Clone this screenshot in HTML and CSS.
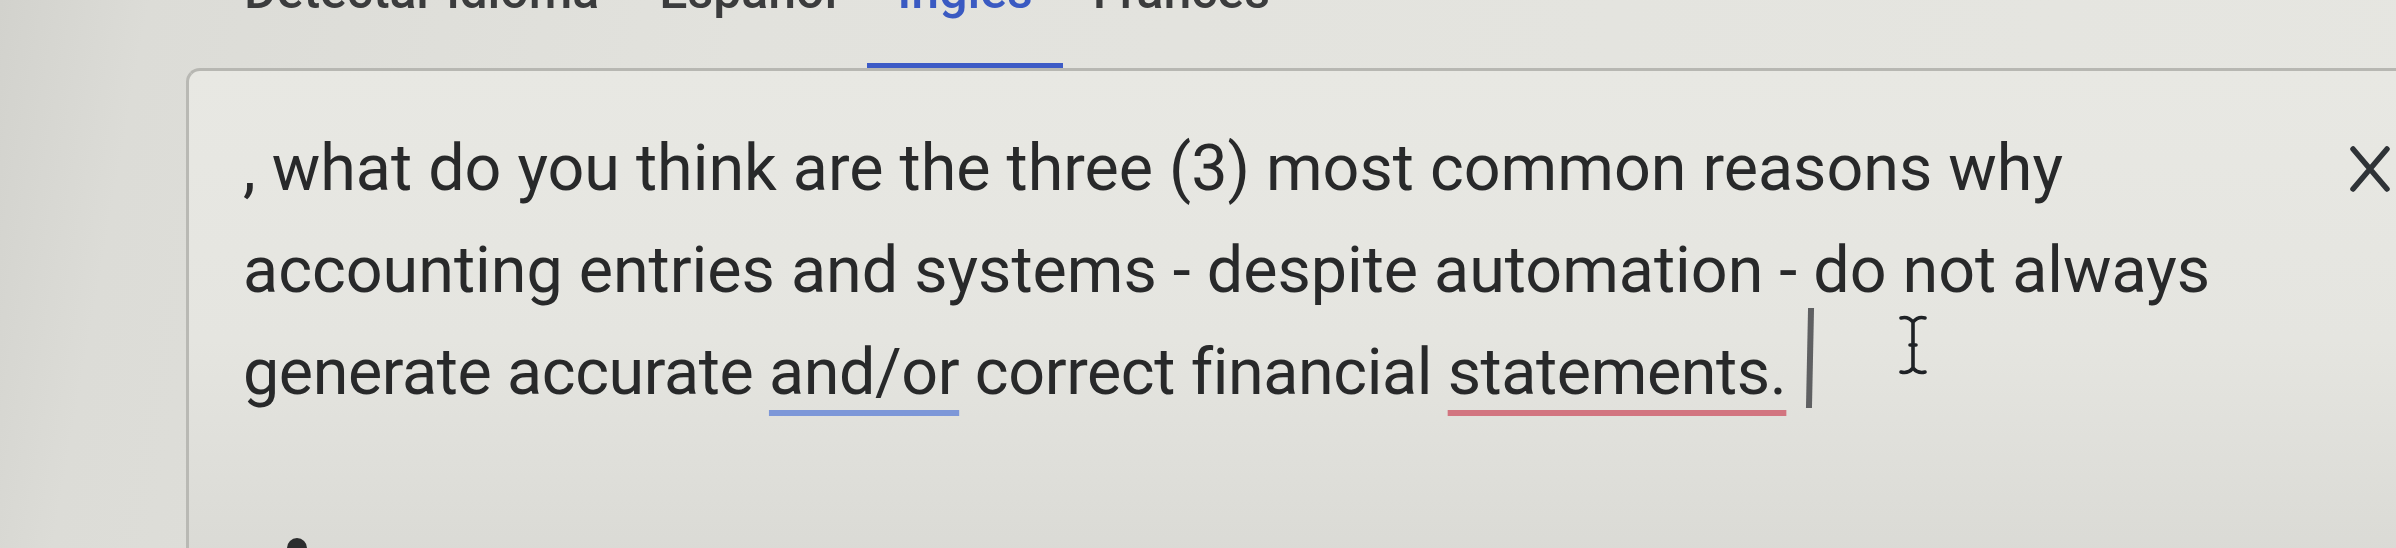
FILE: index.html
```html
<!DOCTYPE html>
<html lang="en">
<head>
<meta charset="utf-8">
<title>Translate</title>
<link rel="stylesheet" href="styles.css">
</head>
<body>
<div class="page">
  <div class="tabbar">
    <div class="tab"><span class="tab-label">Detectar idioma</span></div>
    <div class="tab"><span class="tab-label">Español</span></div>
    <div class="tab tab-active"><span class="tab-label">Inglés</span></div>
    <div class="tab"><span class="tab-label">Francés</span></div>
  </div>
  <div class="card">
    <div class="source">
      <div class="source-text">, what do you think are the three (3) most common reasons why<br>accounting entries and systems - despite automation - do not always<br><span class="last-line">generate accurate <span class="grammar">and/or</span> correct financial <span class="spell">statements.</span></span><span class="caret"></span></div>
      <div class="footer"><span class="footer-icon"></span></div>
    </div>
    <button class="close" aria-label="Borrar texto">
      <svg width="42" height="48" viewBox="0 0 42 48" aria-hidden="true"><path d="M4 4 L38 44 M38 4 L4 44" fill="none" stroke="#2f3337" stroke-width="5.5" stroke-linecap="round"/></svg>
    </button>
    <svg class="ibeam" width="30" height="64" viewBox="0 0 30 64" aria-hidden="true"><path d="M3 5 Q10 3 15 9 Q20 3 27 5 M15 9 L15 55 M3 59 Q10 61 15 55 Q20 61 27 59 M12 32 L18 32" fill="none" stroke="#1f2226" stroke-width="3.6" stroke-linecap="round"/></svg>
  </div>
</div>
</body>
</html>
```

FILE: styles.css
```css
html, body {
  margin: 0;
  padding: 0;
}
body {
  width: 2396px;
  height: 548px;
  overflow: hidden;
  background: linear-gradient(100deg, #d2d2cd 0%, #dcdcd7 6%, #e2e2dd 30%, #e6e6e1 100%);
  font-family: Roboto, "Liberation Sans", Arial, sans-serif;
}
.page {
  display: flex;
  flex-direction: column;
  width: 2396px;
  height: 548px;
  overflow: hidden;
}
.tabbar {
  display: flex;
  margin-top: -37px;
  padding-left: 214px;
  height: 106px;
  flex-shrink: 0;
}
.tab {
  padding: 0 30px 44px;
  height: 56px;
  border-bottom: 6px solid transparent;
}
.tab-label {
  display: block;
  font-size: 50px;
  line-height: 56px;
  font-weight: 500;
  color: #3b3c3d;
  white-space: nowrap;
}
.tab-active {
  border-bottom-color: #3d5bc6;
}
.tab-active .tab-label {
  color: #3a5ac2;
}
.card {
  position: relative;
  display: flex;
  align-items: flex-start;
  margin-top: -1px;
  margin-left: 186px;
  width: 2270px;
  flex-shrink: 0;
  flex-grow: 1;
  box-sizing: border-box;
  padding-right: 65px;
  border-top: 3px solid #b7b7b2;
  border-left: 3px solid #b9b9b4;
  border-top-left-radius: 14px;
  background: linear-gradient(180deg, #e8e8e3 0%, #e5e5e0 55%, #dadad5 100%);
}
.source {
  flex: 1;
  display: flex;
  flex-direction: column;
  padding: 46px 0 0 54px;
}
.source-text {
  font-size: 64.6px;
  line-height: 102px;
  color: #28292a;
  white-space: nowrap;
}
.last-line {
  letter-spacing: -0.4px;
}
.grammar {
  text-decoration-line: underline;
  text-decoration-color: #7d97d8;
  text-decoration-thickness: 6px;
  text-underline-offset: 16px;
}
.spell {
  text-decoration-line: underline;
  text-decoration-color: #d27580;
  text-decoration-thickness: 6px;
  text-underline-offset: 16px;
}
.caret {
  display: inline-block;
  width: 6px;
  height: 100px;
  margin-left: 21px;
  vertical-align: -27px;
  transform: translateY(-13px) rotate(1.2deg);
  background: #5f6062;
}
.footer {
  display: flex;
  margin-top: 115px;
  padding-left: 44px;
}
.footer-icon {
  width: 20px;
  height: 20px;
  border-radius: 50%;
  background: #2c2d2e;
}
.close {
  margin-top: 74px;
  padding: 0;
  border: 0;
  background: none;
  width: 42px;
  height: 48px;
  flex-shrink: 0;
}
.close svg {
  display: block;
}
.ibeam {
  position: absolute;
  left: 1709px;
  top: 242px;
}
```
